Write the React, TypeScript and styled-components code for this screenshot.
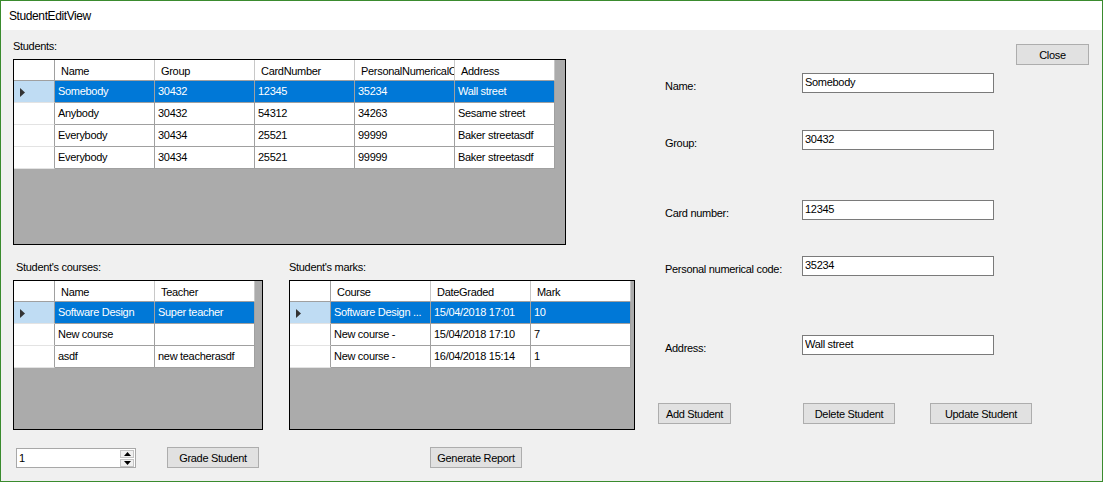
import styled, { createGlobalStyle } from 'styled-components';

const GlobalStyle = createGlobalStyle`
  html, body {
    margin: 0;
    padding: 0;
    background: #f0f0f0;
  }
  * {
    box-sizing: border-box;
  }
  body {
    font-family: "Liberation Sans", Arial, sans-serif;
    font-size: 11px;
    letter-spacing: -0.3px;
    color: #000;
  }
`

type Column = { title: string };

const studentCols: Column[] = [
    { title: "Name" },
    { title: "Group" },
    { title: "CardNumber" },
    { title: "PersonalNumericalCode" },
    { title: "Address" },
]

const students = [
    ["Somebody", "30432", "12345", "35234", "Wall street"],
    ["Anybody", "30432", "54312", "34263", "Sesame street"],
    ["Everybody", "30434", "25521", "99999", "Baker streetasdf"],
    ["Everybody", "30434", "25521", "99999", "Baker streetasdf"],
]

const courseCols: Column[] = [{ title: "Name" }, { title: "Teacher" }]

const courses = [
    ["Software Design", "Super teacher"],
    ["New course", ""],
    ["asdf", "new teacherasdf"],
]

const markCols: Column[] = [{ title: "Course" }, { title: "DateGraded" }, { title: "Mark" }]

const marks = [
    ["Software Design ...", "15/04/2018 17:01", "10"],
    ["New course -", "15/04/2018 17:10", "7"],
    ["New course -", "16/04/2018 15:14", "1"],
]

// margin above each text box, taken from the form layout
const fields = [
    { label: "Name:", value: "Somebody", top: 8 },
    { label: "Group:", value: "30432", top: 37 },
    { label: "Card number:", value: "12345", top: 50 },
    { label: "Personal numerical code:", value: "35234", top: 36 },
    { label: "Address:", value: "Wall street", top: 59 },
]

function DataGrid({ columns, rows, selected, width, height }: {
    columns: Column[];
    rows: string[][];
    selected: number;
    width: number;
    height: number;
}) {
    return (
        <GridFrame $w={width} $h={height}>
            <GridTable $cols={columns.length}>
                <HeadCell $corner />
                {columns.map((c, i) => <HeadCell key={i}>{c.title}</HeadCell>)}
                {rows.map((row, r) => [
                    <RowHead key={`h${r}`} $sel={r === selected}>
                        {r === selected && <svg width="5" height="9" viewBox="0 0 5 9">
                            <path d="M0 0 L5 4.5 L0 9 Z" fill="#333" />
                        </svg>}
                    </RowHead>,
                    ...row.map((v, c) => <Cell key={`${r}-${c}`} $sel={r === selected}>{v}</Cell>)
                ])}
            </GridTable>
        </GridFrame>
    )
}

function App() {
    return (
        <>
            <GlobalStyle />
            <Window>
                <TitleBar>StudentEditView</TitleBar>
                <Body>
                    <LeftPane>
                        <Section>
                            <Caption>Students:</Caption>
                            <DataGrid columns={studentCols} rows={students} selected={0} width={553} height={186} />
                        </Section>
                        <LowerRow>
                            <Section>
                                <Caption $ml={3}>Student's courses:</Caption>
                                <DataGrid columns={courseCols} rows={courses} selected={0} width={250} height={150} />
                            </Section>
                            <Section>
                                <Caption>Student's marks:</Caption>
                                <DataGrid columns={markCols} rows={marks} selected={0} width={346} height={150} />
                            </Section>
                        </LowerRow>
                        <BottomRow>
                            <Spinner>
                                <span>1</span>
                                <SpinButtons>
                                    <SpinButton>
                                        <svg width="7" height="4" viewBox="0 0 7 4"><path d="M0 4 L3.5 0 L7 4 Z" fill="#000" /></svg>
                                    </SpinButton>
                                    <SpinButton>
                                        <svg width="7" height="4" viewBox="0 0 7 4"><path d="M0 0 L3.5 4 L7 0 Z" fill="#000" /></svg>
                                    </SpinButton>
                                </SpinButtons>
                            </Spinner>
                            <Button $w={92} $ml={31}>Grade Student</Button>
                            <Button $w={92} $ml={171}>Generate Report</Button>
                        </BottomRow>
                    </LeftPane>
                    <RightPane>
                        <CloseRow>
                            <Button $w={73}>Close</Button>
                        </CloseRow>
                        {fields.map((f, i) => <Field key={i} $mt={f.top}>
                            <FieldLabel>{f.label}</FieldLabel>
                            <TextBox readOnly value={f.value} />
                        </Field>)}
                        <ActionRow>
                            <Button $w={73}>Add Student</Button>
                            <Button $w={92}>Delete Student</Button>
                            <Button $w={102}>Update Student</Button>
                        </ActionRow>
                    </RightPane>
                </Body>
            </Window>
        </>
    );
}

export default App;

const Window = styled.div`
    width: 1103px;
    height: 482px;
    border: 1px solid #3a8b2e;
    background: #f0f0f0;
    display: flex;
    flex-direction: column;
    overflow: hidden;
`

const TitleBar = styled.div`
    height: 29px;
    flex-shrink: 0;
    background: #fff;
    padding-left: 8px;
    display: flex;
    align-items: center;
    font-size: 12px;
    letter-spacing: -0.4px;
`

const Body = styled.div`
    flex: 1;
    display: flex;
`

const LeftPane = styled.div`
    width: 634px;
    flex-shrink: 0;
    padding: 10px 0 0 12px;
    display: flex;
    flex-direction: column;
`

const Section = styled.div`
    display: flex;
    flex-direction: column;
    gap: 6px;
`

const Caption = styled.div<{ $ml?: number }>`
    line-height: 13px;
    margin-left: ${p => p.$ml || 0}px;
`

const LowerRow = styled.div`
    display: flex;
    gap: 26px;
    margin-top: 16px;
`

const GridFrame = styled.div<{ $w: number; $h: number }>`
    width: ${p => p.$w}px;
    height: ${p => p.$h}px;
    border: 1px solid #000;
    background: #ababab;
    overflow: hidden;
`

const GridTable = styled.div<{ $cols: number }>`
    display: grid;
    grid-template-columns: 41px repeat(${p => p.$cols}, 100px);
    width: max-content;
`

const HeadCell = styled.div<{ $corner?: boolean }>`
    height: 21px;
    background: #fff;
    border-right: 1px solid ${p => p.$corner ? '#a0a0a0' : '#c8c8c8'};
    border-bottom: 1px solid #a0a0a0;
    padding: 1px 2px 0 6px;
    line-height: 20px;
    white-space: nowrap;
    overflow: hidden;
`

const RowHead = styled.div<{ $sel?: boolean }>`
    height: 22px;
    background: ${p => p.$sel ? '#bfdcf3' : '#fff'};
    border-right: 1px solid #a0a0a0;
    border-bottom: 1px solid #e3e3e3;
    padding-left: 6px;
    display: flex;
    align-items: center;
    svg {
        margin-top: 1px;
    }
`

const Cell = styled.div<{ $sel?: boolean }>`
    height: 22px;
    background: ${p => p.$sel ? '#0078d7' : '#fff'};
    color: ${p => p.$sel ? '#fff' : '#000'};
    border-right: 1px solid #a0a0a0;
    border-bottom: 1px solid #a0a0a0;
    padding: 0 3px;
    line-height: 21px;
    white-space: nowrap;
    overflow: hidden;
    text-overflow: ellipsis;
`

const BottomRow = styled.div`
    display: flex;
    align-items: flex-start;
    margin-top: 17px;
`

const Spinner = styled.div`
    width: 120px;
    height: 20px;
    margin: 1px 0 0 3px;
    border: 1px solid #a8a8a8;
    background: #fff;
    display: flex;
    align-items: center;
    justify-content: space-between;
    padding-left: 2px;
    > span {
        line-height: 16px;
    }
`

const SpinButtons = styled.div`
    width: 14px;
    height: 100%;
    margin-right: 1px;
    display: flex;
    flex-direction: column;
    justify-content: center;
    gap: 1px;
`

const SpinButton = styled.div`
    height: 8px;
    background: #f0f0f0;
    border: 1px solid #c4c4c4;
    display: flex;
    align-items: center;
    justify-content: center;
`

const Button = styled.button<{ $w: number; $ml?: number }>`
    width: ${p => p.$w}px;
    height: 21px;
    margin-left: ${p => p.$ml || 0}px;
    padding: 0;
    background: #e1e1e1;
    border: 1px solid #adadad;
    border-radius: 0;
    font-family: "Liberation Sans", Arial, sans-serif;
    font-size: 11px;
    letter-spacing: -0.3px;
    color: #000;
`

const RightPane = styled.div`
    flex: 1;
    margin-left: 23px;
    display: flex;
    flex-direction: column;
`

const CloseRow = styled.div`
    display: flex;
    justify-content: flex-end;
    padding-right: 13px;
    margin-top: 14px;
`

const Field = styled.div<{ $mt: number }>`
    display: grid;
    grid-template-columns: 137px 192px;
    grid-template-rows: 20px;
    align-items: start;
    padding-left: 7px;
    margin-top: ${p => p.$mt}px;
`

const FieldLabel = styled.div`
    margin-top: 7px;
    line-height: 13px;
`

const TextBox = styled.input`
    width: 192px;
    height: 20px;
    border: 1px solid #7a7a7a;
    border-radius: 0;
    padding: 0 0 3px 2px;
    background: #fff;
    font-family: "Liberation Sans", Arial, sans-serif;
    font-size: 11px;
    letter-spacing: -0.3px;
    color: #000;
    outline: none;
`

const ActionRow = styled.div`
    display: grid;
    grid-template-columns: 145px 127px auto;
    justify-items: start;
    margin-top: 48px;
`
